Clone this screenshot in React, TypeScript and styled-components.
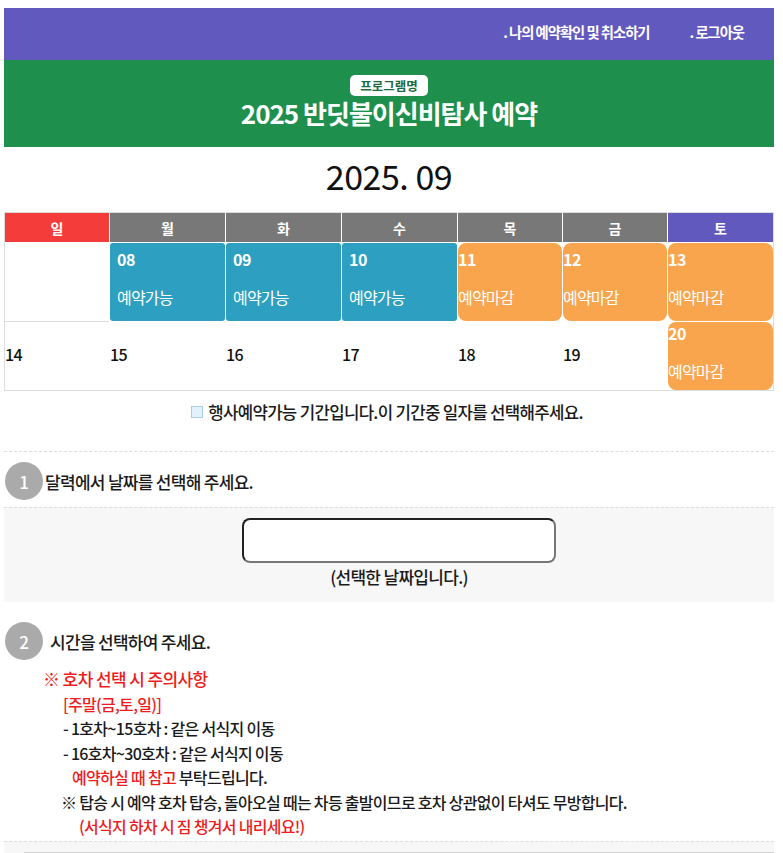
import React from "react";
import styled, { createGlobalStyle } from "styled-components";

const GlobalStyle = createGlobalStyle`
  html, body { margin: 0; padding: 0; background: #fff; }
  body {
    font-family: "Noto Sans CJK KR", "Noto Sans", sans-serif;
    color: #111;
  }
  * { box-sizing: border-box; }
`;

const Page = styled.div`
  width: 770px;
  margin: 8px 0 0 4px;
`;

const TopBar = styled.div`
  height: 52px;
  background: #6259bf;
  display: flex;
  justify-content: flex-end;
  align-items: center;
  gap: 40px;
  padding: 0 30px 6px 0;
`;

const TopLink = styled.a`
  color: #fff;
  font-size: 14.3px;
  font-weight: 700;
  letter-spacing: -1px;
  text-decoration: none;
  white-space: pre;
`;

const Hero = styled.div`
  height: 87px;
  background: #1f8f4e;
  display: flex;
  flex-direction: column;
  align-items: center;
  padding-top: 15px;
`;

const Badge = styled.span`
  background: #fff;
  color: #1d6a3c;
  font-size: 12.5px;
  font-weight: 700;
  border-radius: 5px;
  height: 21px;
  line-height: 21px;
  padding: 0 10px;
`;

const Title = styled.h1`
  margin: 4px 0 0;
  color: #fff;
  font-size: 26px;
  font-weight: 700;
  letter-spacing: -1px;
  line-height: 26px;
`;

const Month = styled.div`
  height: 65px;
  display: flex;
  justify-content: center;
  align-items: center;
  font-size: 34px;
  font-weight: 400;
  letter-spacing: -0.5px;
  color: #111;
  padding-bottom: 8px;
`;

const Calendar = styled.div`
  display: grid;
  grid-template-columns: 104px 115px 115px 115px 104px 104px 105px;
  grid-template-rows: 29px 78px 68px;
  column-gap: 1px;
  row-gap: 1px;
  border: 1px solid #ddd;
  background: #fff;
`;

const HeadCell = styled.div<{ $tone: "sun" | "day" | "sat" }>`
  background: ${(p) => (p.$tone === "sun" ? "#f43c3b" : p.$tone === "sat" ? "#6259bf" : "#787878")};
  color: #fff;
  font-size: 14px;
  font-weight: 700;
  display: flex;
  justify-content: center;
  align-items: center;
`;

const EmptyCell = styled.div`
  background: #fff;
  box-shadow: 0 1px 0 #ddd;
`;

const DayCell = styled.div<{ $kind: "open" | "closed"; $compact?: boolean }>`
  background: ${(p) => (p.$kind === "open" ? "#2d9fc0" : "#f9a54e")};
  border-radius: ${(p) => (p.$kind === "open" ? "3px" : "8px")};
  color: #fff;
  display: flex;
  flex-direction: column;
  padding: ${(p) => (p.$kind === "open" ? "0 7px" : "0")};
  padding-top: ${(p) => (p.$compact ? "0px" : "5px")};
`;

const DayNum = styled.div`
  font-size: 16px;
  font-weight: 700;
  line-height: 22px;
  letter-spacing: -0.5px;
`;

const DayLabel = styled.div`
  margin-top: 16px;
  font-size: 16px;
  font-weight: 400;
  line-height: 22px;
  letter-spacing: -0.8px;
`;

const PlainCell = styled.div`
  display: flex;
  align-items: center;
  font-size: 16px;
  font-weight: 500;
  letter-spacing: -0.5px;
  padding-bottom: 4px;
`;

const Legend = styled.div`
  display: flex;
  justify-content: center;
  align-items: center;
  gap: 5px;
  height: 60px;
  padding: 0 4px 18px 0;
  font-size: 16.8px;
  font-weight: 500;
  letter-spacing: -0.7px;
  color: #1a1a1a;
`;

const LegendBox = styled.span`
  width: 12px;
  height: 12px;
  background: #e2f1fb;
  border: 1px solid #a9cfe3;
  display: inline-block;
`;

const StepSection = styled.section<{ $pad: string; $dashed?: boolean }>`
  border-top: ${(p) => (p.$dashed ? "1px dashed #ddd" : "none")};
  padding: ${(p) => p.$pad};
`;

const StepHead = styled.div<{ $gap: number }>`
  display: flex;
  align-items: center;
  gap: ${(p) => p.$gap}px;
  font-size: 17px;
  font-weight: 500;
  letter-spacing: -0.7px;
  color: #1a1a1a;
`;

const StepNum = styled.span`
  width: 38px;
  height: 38px;
  border-radius: 50%;
  background: #aaa;
  color: #fff;
  font-size: 17px;
  font-weight: 500;
  display: flex;
  justify-content: center;
  align-items: center;
  letter-spacing: 0;
`;

const DateBox = styled.section`
  border-top: 1px dashed #ddd;
  background: #f7f7f7;
  height: 95px;
  display: flex;
  flex-direction: column;
  align-items: center;
  padding: 10px 0 0 20px;
`;

const DateInput = styled.input`
  width: 314px;
  height: 45px;
  border: 2px solid;
  border-color: #222 #777 #777 #222;
  border-radius: 8px;
  background: #fff;
  outline: none;
`;

const DateCaption = styled.div`
  margin-top: 1px;
  font-size: 17px;
  font-weight: 500;
  letter-spacing: -0.7px;
  color: #1a1a1a;
`;

const Notes = styled.div`
  padding: 7px 0 0 38px;
  font-size: 16px;
  font-weight: 500;
  letter-spacing: -0.7px;
  line-height: 24.5px;
  color: #1a1a1a;
`;

const NoteLine = styled.div<{ $indent: number; $red?: boolean; $big?: boolean }>`
  padding-left: ${(p) => p.$indent}px;
  color: ${(p) => (p.$red ? "#ee1c1c" : "inherit")};
  font-size: ${(p) => (p.$big ? "17px" : "inherit")};
  letter-spacing: ${(p) => (p.$big ? "-0.6px" : "inherit")};
`;

const Red = styled.span`
  color: #ee1c1c;
`;

const Bottom = styled.section`
  border-top: 1px dashed #ddd;
  background: #f7f7f7;
  height: 30px;
  padding: 10px 0 0 20px;
`;

const BottomInner = styled.div`
  border-top: 1px solid #d4d4d4;
  height: 20px;
`;

export default function App() {
  return (
    <>
      <GlobalStyle />
      <Page>
        <TopBar>
          <TopLink href="#">. 나의 예약확인 및 취소하기</TopLink>
          <TopLink href="#">. 로그아웃</TopLink>
        </TopBar>
        <Hero>
          <Badge>프로그램명</Badge>
          <Title>2025 반딧불이신비탐사 예약</Title>
        </Hero>
        <Month>2025. 09</Month>
        <Calendar>
          <HeadCell $tone="sun">일</HeadCell>
          <HeadCell $tone="day">월</HeadCell>
          <HeadCell $tone="day">화</HeadCell>
          <HeadCell $tone="day">수</HeadCell>
          <HeadCell $tone="day">목</HeadCell>
          <HeadCell $tone="day">금</HeadCell>
          <HeadCell $tone="sat">토</HeadCell>

          <EmptyCell />
          {["08", "09", "10"].map((d) => (
            <DayCell key={d} $kind="open">
              <DayNum>{d}</DayNum>
              <DayLabel>예약가능</DayLabel>
            </DayCell>
          ))}
          {["11", "12", "13"].map((d) => (
            <DayCell key={d} $kind="closed">
              <DayNum>{d}</DayNum>
              <DayLabel>예약마감</DayLabel>
            </DayCell>
          ))}

          {["14", "15", "16", "17", "18", "19"].map((d) => (
            <PlainCell key={d}>{d}</PlainCell>
          ))}
          <DayCell $kind="closed" $compact>
            <DayNum>20</DayNum>
            <DayLabel>예약마감</DayLabel>
          </DayCell>
        </Calendar>
        <Legend>
          <LegendBox />
          행사예약가능 기간입니다.이 기간중 일자를 선택해주세요.
        </Legend>
        <StepSection $dashed $pad="10px 0 7px 1px">
          <StepHead $gap={2}>
            <StepNum>1</StepNum>
            달력에서 날짜를 선택해 주세요.
          </StepHead>
        </StepSection>
        <DateBox>
          <DateInput type="text" readOnly />
          <DateCaption>(선택한 날짜입니다.)</DateCaption>
        </DateBox>
        <StepSection $pad="20px 0 2px 1px">
          <StepHead $gap={7}>
            <StepNum>2</StepNum>
            시간을 선택하여 주세요.
          </StepHead>
          <Notes>
            <NoteLine $indent={0} $red $big>※ 호차 선택 시 주의사항</NoteLine>
            <NoteLine $indent={20} $red>[주말(금,토,일)]</NoteLine>
            <NoteLine $indent={20}>- 1호차~15호차 : 같은 서식지 이동</NoteLine>
            <NoteLine $indent={20}>- 16호차~30호차 : 같은 서식지 이동</NoteLine>
            <NoteLine $indent={29}>
              <Red>예약하실 때 참고</Red> 부탁드립니다.
            </NoteLine>
            <NoteLine $indent={18}>※ 탑승 시 예약 호차 탑승, 돌아오실 때는 차등 출발이므로 호차 상관없이 타셔도 무방합니다.</NoteLine>
            <NoteLine $indent={36} $red>(서식지 하차 시 짐 챙겨서 내리세요!)</NoteLine>
          </Notes>
        </StepSection>
        <Bottom>
          <BottomInner />
        </Bottom>
      </Page>
    </>
  );
}
